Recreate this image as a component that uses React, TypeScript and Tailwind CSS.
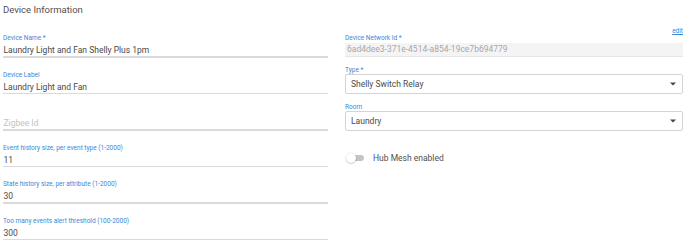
import React from "react";

const font = { fontFamily: "Roboto, 'Noto Sans', sans-serif" };

const Field = ({ label, value, placeholder }: { label?: string; value?: string; placeholder?: string }) => (
  <div className="flex flex-col">
    <div className="h-[8px] text-[6.5px] leading-[8px] text-[#3a88d6]">{label ?? ""}</div>
    <div className="mt-[2px] h-[12px] text-[8.5px] leading-[12px] pl-[0.5px]">
      {value ? (
        <span className="text-[#4a4a4a]">{value}</span>
      ) : (
        <span className="text-[#c2c2c2]">{placeholder}</span>
      )}
    </div>
    <div className="h-[1.5px] bg-[#dadada]" />
  </div>
);

const Caret = () => (
  <svg width="6" height="4" viewBox="0 0 6 4" className="shrink-0">
    <path d="M0 0.5 L6 0.5 L3 3.5 Z" fill="#444" />
  </svg>
);

const Select = ({ label, value }: { label: string; value: string }) => (
  <div className="flex flex-col">
    <div className="h-[8px] text-[6.5px] leading-[8px] text-[#3a88d6]">{label}</div>
    <div className="h-[20px] border border-[#d4d4d4] rounded-[2px] flex items-center justify-between pl-[5px] pr-[6px]">
      <span className="text-[8.5px] text-[#4a4a4a]">{value}</span>
      <Caret />
    </div>
  </div>
);

export default function App() {
  return (
    <div className="w-[690px] h-[246px] bg-white overflow-hidden" style={font}>
      <div className="flex pl-[3px] pr-[7px]">
        <div className="w-[325px] flex flex-col">
          <div className="h-[20px] flex items-center text-[9.5px] text-[#505050]">Device Information</div>
          <div className="mt-[14px] flex flex-col gap-[13px]">
            <Field label="Device Name *" value="Laundry Light and Fan Shelly Plus 1pm" />
            <Field label="Device Label" value="Laundry Light and Fan" />
            <Field placeholder="Zigbee Id" />
            <Field label="Event history size, per event type (1-2000)" value="11" />
            <Field label="State history size, per attribute (1-2000)" value="30" />
            <Field label="Too many events alert threshold (100-2000)" value="300" />
          </div>
        </div>
        <div className="ml-[17px] flex-1 flex flex-col pt-[34px]">
          <div className="relative flex flex-col">
            <a className="absolute right-0 top-[-7px] text-[6.5px] leading-[8px] text-[#3a88d6] underline">edit</a>
            <div className="h-[8px] text-[6.5px] leading-[8px] text-[#3a88d6]">Device Network Id *</div>
            <div className="mt-[1px] h-[14px] bg-[#f4f4f4] border-b border-[#e6e6e6] flex items-center pl-[2px] text-[8.5px] text-[#a8a8a8]">
              6ad4dee3-371e-4514-a854-19ce7b694779
            </div>
          </div>
          <div className="mt-[9px]">
            <Select label="Type *" value="Shelly Switch Relay" />
          </div>
          <div className="mt-[9px]">
            <Select label="Room" value="Laundry" />
          </div>
          <div className="mt-[21px] h-[12px] flex items-center">
            <div className="relative w-[20px] h-[12px] flex items-center">
              <div className="ml-[4px] w-[15px] h-[6px] rounded-full bg-[#c4c4c4]" />
              <div className="absolute left-[1px] top-[1px] w-[10px] h-[10px] rounded-full bg-white shadow-[0_0.5px_1.5px_rgba(0,0,0,0.35)]" />
            </div>
            <span className="ml-[8px] text-[8.5px] text-[#505050]">Hub Mesh enabled</span>
          </div>
        </div>
      </div>
    </div>
  );
}
